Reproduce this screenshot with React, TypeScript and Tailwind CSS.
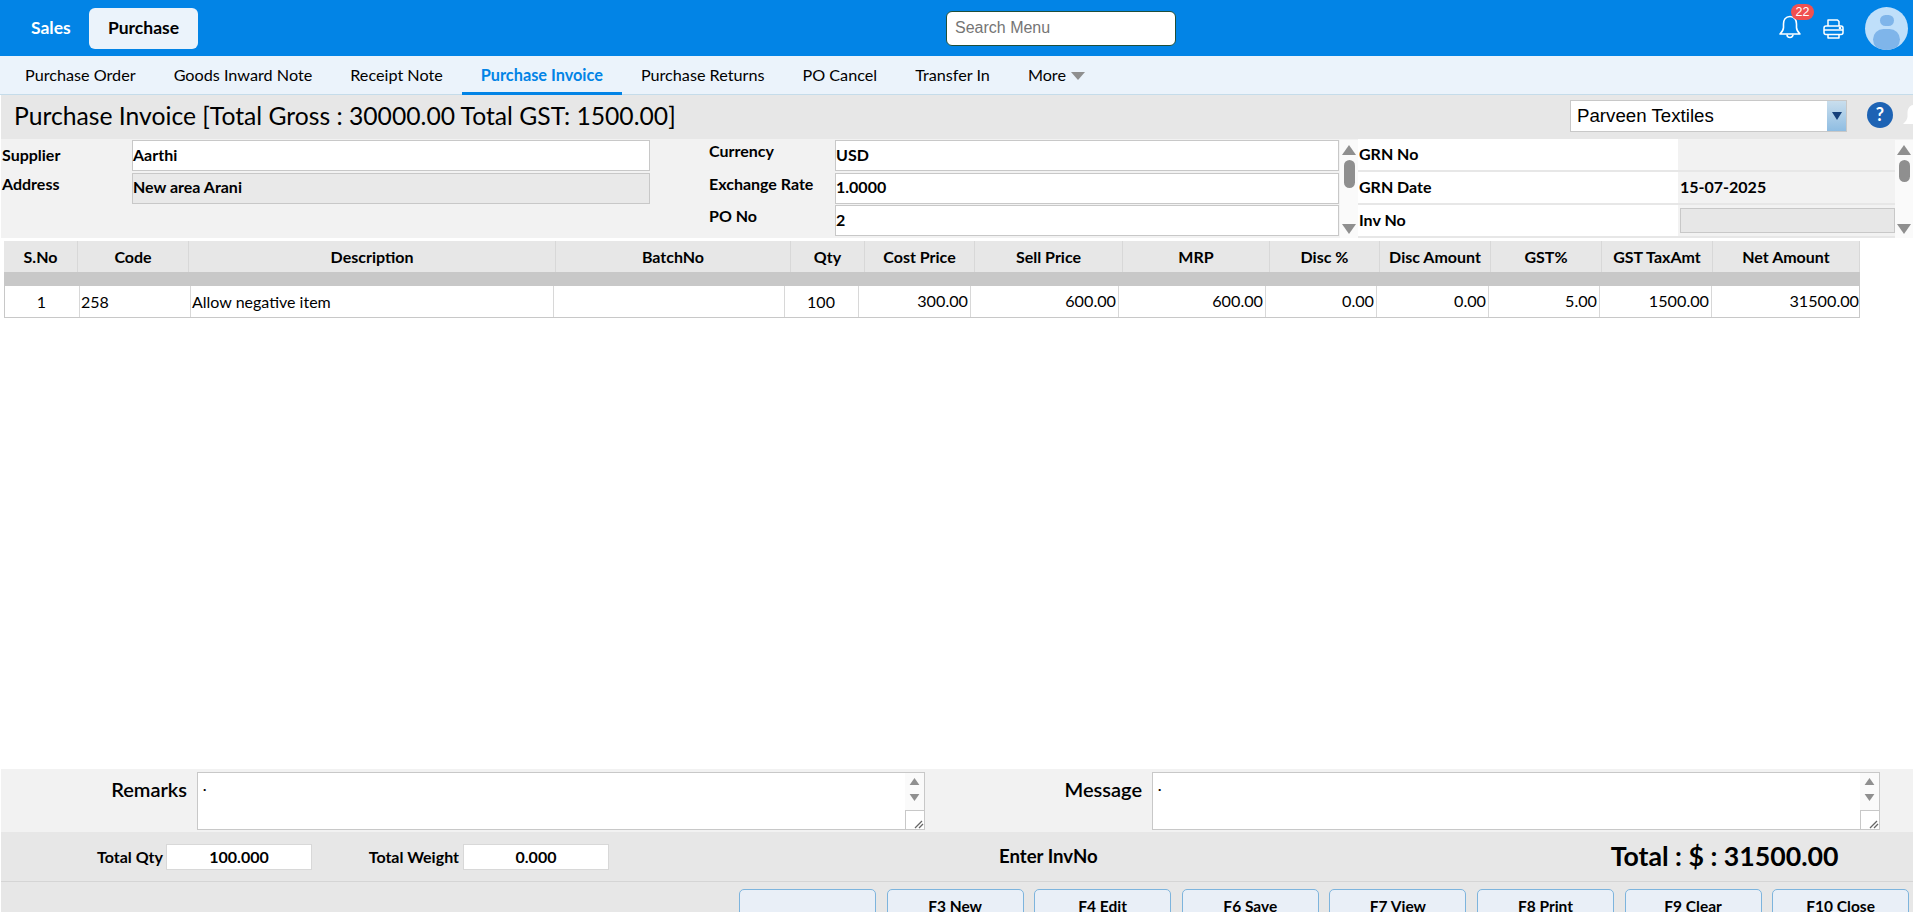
import React from 'react';

const subMenus = ['Purchase Order', 'Goods Inward Note', 'Receipt Note', 'Purchase Invoice', 'Purchase Returns', 'PO Cancel', 'Transfer In'];

const headers = [
  { label: 'S.No', w: 'w-[74px]' },
  { label: 'Code', w: 'w-[111px]' },
  { label: 'Description', w: 'w-[367px]' },
  { label: 'BatchNo', w: 'w-[235px]' },
  { label: 'Qty', w: 'w-[74px]' },
  { label: 'Cost Price', w: 'w-[110px]' },
  { label: 'Sell Price', w: 'w-[148px]' },
  { label: 'MRP', w: 'w-[147px]' },
  { label: 'Disc %', w: 'w-[110px]' },
  { label: 'Disc Amount', w: 'w-[111px]' },
  { label: 'GST%', w: 'w-[111px]' },
  { label: 'GST TaxAmt', w: 'w-[111px]' },
  { label: 'Net Amount', w: 'w-[147px]' },
];

const cells = [
  { value: '1', w: 'w-[75px]', align: 'text-center' },
  { value: '258', w: 'w-[111px]', align: 'text-left' },
  { value: 'Allow negative item', w: 'w-[363px]', align: 'text-left' },
  { value: '', w: 'w-[231px]', align: 'text-left' },
  { value: '100', w: 'w-[74px]', align: 'text-center' },
  { value: '300.00', w: 'w-[112px]', align: 'text-right' },
  { value: '600.00', w: 'w-[148px]', align: 'text-right' },
  { value: '600.00', w: 'w-[147px]', align: 'text-right' },
  { value: '0.00', w: 'w-[111px]', align: 'text-right' },
  { value: '0.00', w: 'w-[112px]', align: 'text-right' },
  { value: '5.00', w: 'w-[111px]', align: 'text-right' },
  { value: '1500.00', w: 'w-[112px]', align: 'text-right' },
  { value: '31500.00', w: 'w-[149px]', align: 'text-right' },
];

const buttons = ['', 'F3 New', 'F4 Edit', 'F6 Save', 'F7 View', 'F8 Print', 'F9 Clear', 'F10 Close'];

const BellIcon = ({ className }: { className?: string }) => (
  <svg viewBox="0 0 22 24" fill="none" stroke="currentColor" strokeWidth="1.6" strokeLinejoin="round" className={className}>
    <path d="M11 1.5 C6.5 1.5 4.5 5 4.5 9 V12.5 C4.5 15.5 2.5 17.5 1 19 H21 C19.5 17.5 17.5 15.5 17.5 12.5 V9 C17.5 5 15.5 1.5 11 1.5 Z" />
    <path d="M8 19.5 a3 3 0 0 0 6 0" />
  </svg>
);

const PrinterIcon = ({ className }: { className?: string }) => (
  <svg viewBox="0 0 21 20" fill="none" stroke="currentColor" strokeWidth="1.5" strokeLinejoin="round" className={className}>
    <path d="M5 7 V1 H14.5 L16 2.5 V7" />
    <rect x="1" y="7" width="19" height="8.5" rx="2" />
    <path d="M1 11 H20" />
    <path d="M5 15.5 V19 H16 V15.5" />
    <circle cx="17" cy="9" r="0.6" fill="currentColor" />
  </svg>
);

const Arrow = ({ up, size = 14 }: { up?: boolean; size?: number }) => (
  <svg width={size} height={size - 4} viewBox="0 0 14 10" className="shrink-0">
    <polygon points={up ? '7,0 14,10 0,10' : '0,0 14,0 7,10'} fill="#8f8f8f" />
  </svg>
);

const ScrollBar = ({ thumb }: { thumb: string }) => (
  <div className="w-[18px] h-full flex flex-col items-center justify-between pt-[5px] pb-[4px] bg-[#fafafa]">
    <div className="flex flex-col items-center gap-[5px]">
      <Arrow up />
      <div className={`w-[11px] ${thumb} rounded-full bg-[#8f8f8f]`} />
    </div>
    <Arrow />
  </div>
);

const TextBox = ({ value, className = 'bg-white' }: { value: string; className?: string }) => (
  <div className={`h-[31px] mb-[1.5px] pb-[2px] shrink-0 border border-[#c8c8c8] flex items-center text-[16px] font-bold text-black ${className}`}>
    {value}
  </div>
);

const GrnRow = ({ label, children }: { label: string; children?: React.ReactNode }) => (
  <div className="flex h-[33px] shrink-0 border-b-2 border-[#e7e7e7]">
    <div className="w-[320px] pl-[1px] pb-[2px] bg-white flex items-center text-[16px] font-bold text-black">{label}</div>
    <div className="flex-1 flex items-center pl-[2px] pb-[1px] text-[16px] font-bold text-black">{children}</div>
  </div>
);

const NoteBox = ({ label, labelWidth, boxWidth }: { label: string; labelWidth: string; boxWidth: string }) => (
  <div className="flex items-start">
    <div className={`${labelWidth} text-right pr-[10px] pt-[2px] text-[20px] font-semibold text-black`}>{label}</div>
    <div className={`${boxWidth} h-[58px] border border-[#c8c8c8] bg-white flex justify-between`}>
      <div className="pl-[5px] pt-[3px] text-[14px] font-bold leading-[20px] text-black">.</div>
      <div className="w-[19px] h-full flex flex-col items-center justify-between bg-[#fafafa]">
        <div className="flex flex-col items-center gap-[9px] pt-[5px]">
          <Arrow up size={11} />
          <Arrow size={11} />
        </div>
        <div className="w-[19px] h-[19px] bg-white border-l border-t border-[#c8c8c8] flex items-end justify-end">
          <svg width="10" height="10" viewBox="0 0 10 10">
            <path d="M1 9 L8 2 M5 9 L9 5" stroke="#666" strokeWidth="1.3" fill="none" />
          </svg>
        </div>
      </div>
    </div>
  </div>
);

const App = () => {
  return (
    <div className="h-screen overflow-hidden flex flex-col bg-white text-black font-['Lato',sans-serif]">
      {/* top bar */}
      <div className="h-[56px] shrink-0 bg-[#0284e6] flex items-center">
        <div className="w-[89px] pl-[31px] text-white text-[17.5px] font-bold">Sales</div>
        <div className="w-[109px] h-[41px] rounded-[6px] bg-[#ebf3fb] flex items-center justify-center text-[17.5px] font-bold text-black">
          Purchase
        </div>
        <div className="ml-[748px] w-[230px] h-[35px] rounded-[6px] bg-white border border-[#1f4f3a] pl-[8px] flex items-center text-[16px] text-[#757575] font-['Liberation_Sans',sans-serif]">
          Search Menu
        </div>
        <div className="ml-[603px] self-start mt-[15px] relative w-[22px] h-[24px] text-white">
          <BellIcon className="w-[22px] h-[24px]" />
          <span className="absolute top-[-11px] left-[12px] w-[23px] h-[16px] rounded-full bg-[#f05050] text-white text-[12.5px] leading-[16px] text-center font-['Liberation_Sans',sans-serif]">22</span>
        </div>
        <PrinterIcon className="ml-[22px] self-start mt-[19px] w-[21px] h-[20px] text-white" />
        <div className="ml-[21px] w-[43px] h-[43px] rounded-full bg-[#bfdffa] overflow-hidden flex flex-col items-center">
          <div className="w-[14px] h-[14px] mt-[8px] rounded-full bg-[#7fb5ea]" />
          <div className="w-[27px] h-[26px] mt-[3px] rounded-full bg-[#7fb5ea]" />
        </div>
      </div>

      {/* sub menu */}
      <div className="h-[39px] shrink-0 bg-[#ebf3fb] border-b border-[#c5dcea] flex pl-[6px]">
        {subMenus.map((m) =>
          m === 'Purchase Invoice' ? (
            <div key={m} className="px-[19px] h-[39px] pt-[3px] flex items-center border-b-[3px] border-[#0284e6] text-[#0284e6] text-[16.3px] font-bold">{m}</div>
          ) : (
            <div key={m} className="px-[19px] h-[38px] pt-[1px] flex items-center text-[16.2px] text-black">{m}</div>
          )
        )}
        <div className="px-[19px] h-[38px] pt-[1px] flex items-center gap-[5px] text-[16.2px] text-black">
          More
          <svg width="14" height="8" viewBox="0 0 14 8"><polygon points="0,0 14,0 7,8" fill="#8f8f8f" /></svg>
        </div>
      </div>

      {/* title */}
      <div className="h-[44px] shrink-0 ml-[1px] bg-[#e7e7e7] flex items-center overflow-hidden">
        <div className="pl-[13px] pb-[2px] text-[24.7px] text-black flex-1">Purchase Invoice [Total Gross : 30000.00 Total GST: 1500.00]</div>
        <div className="w-[277px] h-[32px] mb-[2px] border border-[#c8c8c8] bg-white flex items-center justify-between">
          <span className="pl-[6px] text-[18.7px] font-['Liberation_Sans',sans-serif]">Parveen Textiles</span>
          <div className="w-[19px] h-full flex items-center justify-center bg-gradient-to-b from-[#c9deed] to-[#8fbde2]">
            <svg width="10" height="8" viewBox="0 0 10 8"><polygon points="0,0 10,0 5,8" fill="#16407a" /></svg>
          </div>
        </div>
        <div className="ml-[20px] w-[26px] h-[26px] mb-[5px] rounded-full bg-[#1d63b4] text-white text-[18px] font-bold flex items-center justify-center">?</div>
        <div className="ml-[10px] w-[10px] h-[24px] mb-[3px] overflow-hidden text-white shrink-0">
          <svg viewBox="0 0 22 24" className="w-[22px] h-[24px] max-w-none">
            <path d="M11 1 C6.5 1 4.5 5 4.5 9 V12.5 C4.5 15.5 2.5 17.5 0 20 H22 C19.5 17.5 17.5 15.5 17.5 12.5 V9 C17.5 5 15.5 1 11 1 Z" fill="currentColor" />
          </svg>
        </div>
      </div>

      {/* form */}
      <div className="h-[99px] shrink-0 ml-[1px] bg-[#f2f2f2] flex pt-[1px] overflow-hidden">
        <div className="w-[649px] flex flex-col">
          <div className="flex h-[32.5px] shrink-0">
            <div className="w-[131px] pl-[1px] pt-[3px] text-[16px] font-bold">Supplier</div>
            <TextBox value="Aarthi" className="bg-white flex-1" />
          </div>
          <div className="flex h-[32.5px] shrink-0">
            <div className="w-[131px] pl-[1px] -mt-[1px] text-[16px] font-bold">Address</div>
            <TextBox value="New area Arani" className="bg-[#e9e9e9] flex-1" />
          </div>
        </div>
        <div className="ml-[59px] w-[630px] flex">
          <div className="w-[126px] -mt-[1px] flex flex-col text-[16px] font-bold">
            <div className="h-[32.5px] shrink-0">Currency</div>
            <div className="h-[32.5px] shrink-0">Exchange Rate</div>
            <div className="h-[32.5px] shrink-0">PO No</div>
          </div>
          <div className="w-[504px] flex flex-col">
            <TextBox value="USD" />
            <TextBox value="1.0000" />
            <TextBox value="2" />
            <TextBox value="" />
          </div>
        </div>
        <div className="ml-[1px] h-full"><ScrollBar thumb="h-[28px]" /></div>
        <div className="w-[537px] -mt-[1px] flex flex-col">
          <GrnRow label="GRN No" />
          <GrnRow label="GRN Date">15-07-2025</GrnRow>
          <GrnRow label="Inv No">
            <div className="w-full h-[25px] border border-[#c8c8c8] bg-[#e7e7e7]" />
          </GrnRow>
        </div>
        <ScrollBar thumb="h-[22px]" />
      </div>

      {/* grid */}
      <div className="flex-1 pt-[3px] pl-[4px] bg-white overflow-hidden">
        <div className="flex h-[31px] w-[1856px] bg-[#e7e7e7]">
          {headers.map((h) => (
            <div key={h.label} className={`${h.w} shrink-0 flex items-center justify-center border-r border-[#d8d8d8] text-[16px] font-bold text-black`}>
              {h.label}
            </div>
          ))}
        </div>
        <div className="h-[14px] w-[1856px] bg-[#c8c8c8]" />
        <div className="flex h-[32px] w-[1856px] border-b border-l border-r border-[#c8c8c8]">
          {cells.map((c, i) => (
            <div key={i} className={`${c.w} shrink-0 pl-[1px] pr-[2px] flex items-center border-r last:border-r-0 border-[#d8d8d8] text-black ${c.align === 'text-right' ? 'text-[16.2px]' : 'text-[16px]'}`}>
              <span className={`w-full ${c.align}`}>{c.value}</span>
            </div>
          ))}
        </div>
      </div>

      {/* remarks */}
      <div className="h-[63px] shrink-0 ml-[1px] bg-[#f2f2f2] pt-[3px] flex">
        <NoteBox label="Remarks" labelWidth="w-[196px]" boxWidth="w-[728px]" />
        <NoteBox label="Message" labelWidth="w-[227px]" boxWidth="w-[728px]" />
      </div>

      {/* totals */}
      <div className="h-[50px] shrink-0 ml-[1px] bg-[#e7e7e7] border-b border-[#d5d5d5] flex items-center">
        <div className="w-[165px] text-right pr-[3px] text-[16px] font-bold">Total Qty</div>
        <div className="w-[146px] h-[26px] bg-white border border-[#d8d8d8] flex items-center justify-center text-[16px] font-bold">100.000</div>
        <div className="w-[151px] text-right pr-[4px] text-[16px] font-bold">Total Weight</div>
        <div className="w-[146px] h-[26px] bg-white border border-[#d8d8d8] flex items-center justify-center text-[16px] font-bold">0.000</div>
        <div className="ml-[390px] text-[18.6px] font-bold">Enter InvNo</div>
        <div className="ml-[513px] text-[26.7px] font-bold">Total : $ : 31500.00</div>
      </div>

      {/* action buttons */}
      <div className="h-[30px] shrink-0 ml-[1px] bg-[#e7e7e7] pt-[7px] pl-[738px] flex gap-[10.6px] overflow-hidden">
        {buttons.map((b, i) => (
          <div key={i} className="w-[137px] h-[36px] shrink-0 rounded-[5px] border border-[#7db4dd] bg-[#e9eff7] flex items-center justify-center text-[15.5px] font-bold text-black">
            {b}
          </div>
        ))}
      </div>
    </div>
  );
};

export default App;
